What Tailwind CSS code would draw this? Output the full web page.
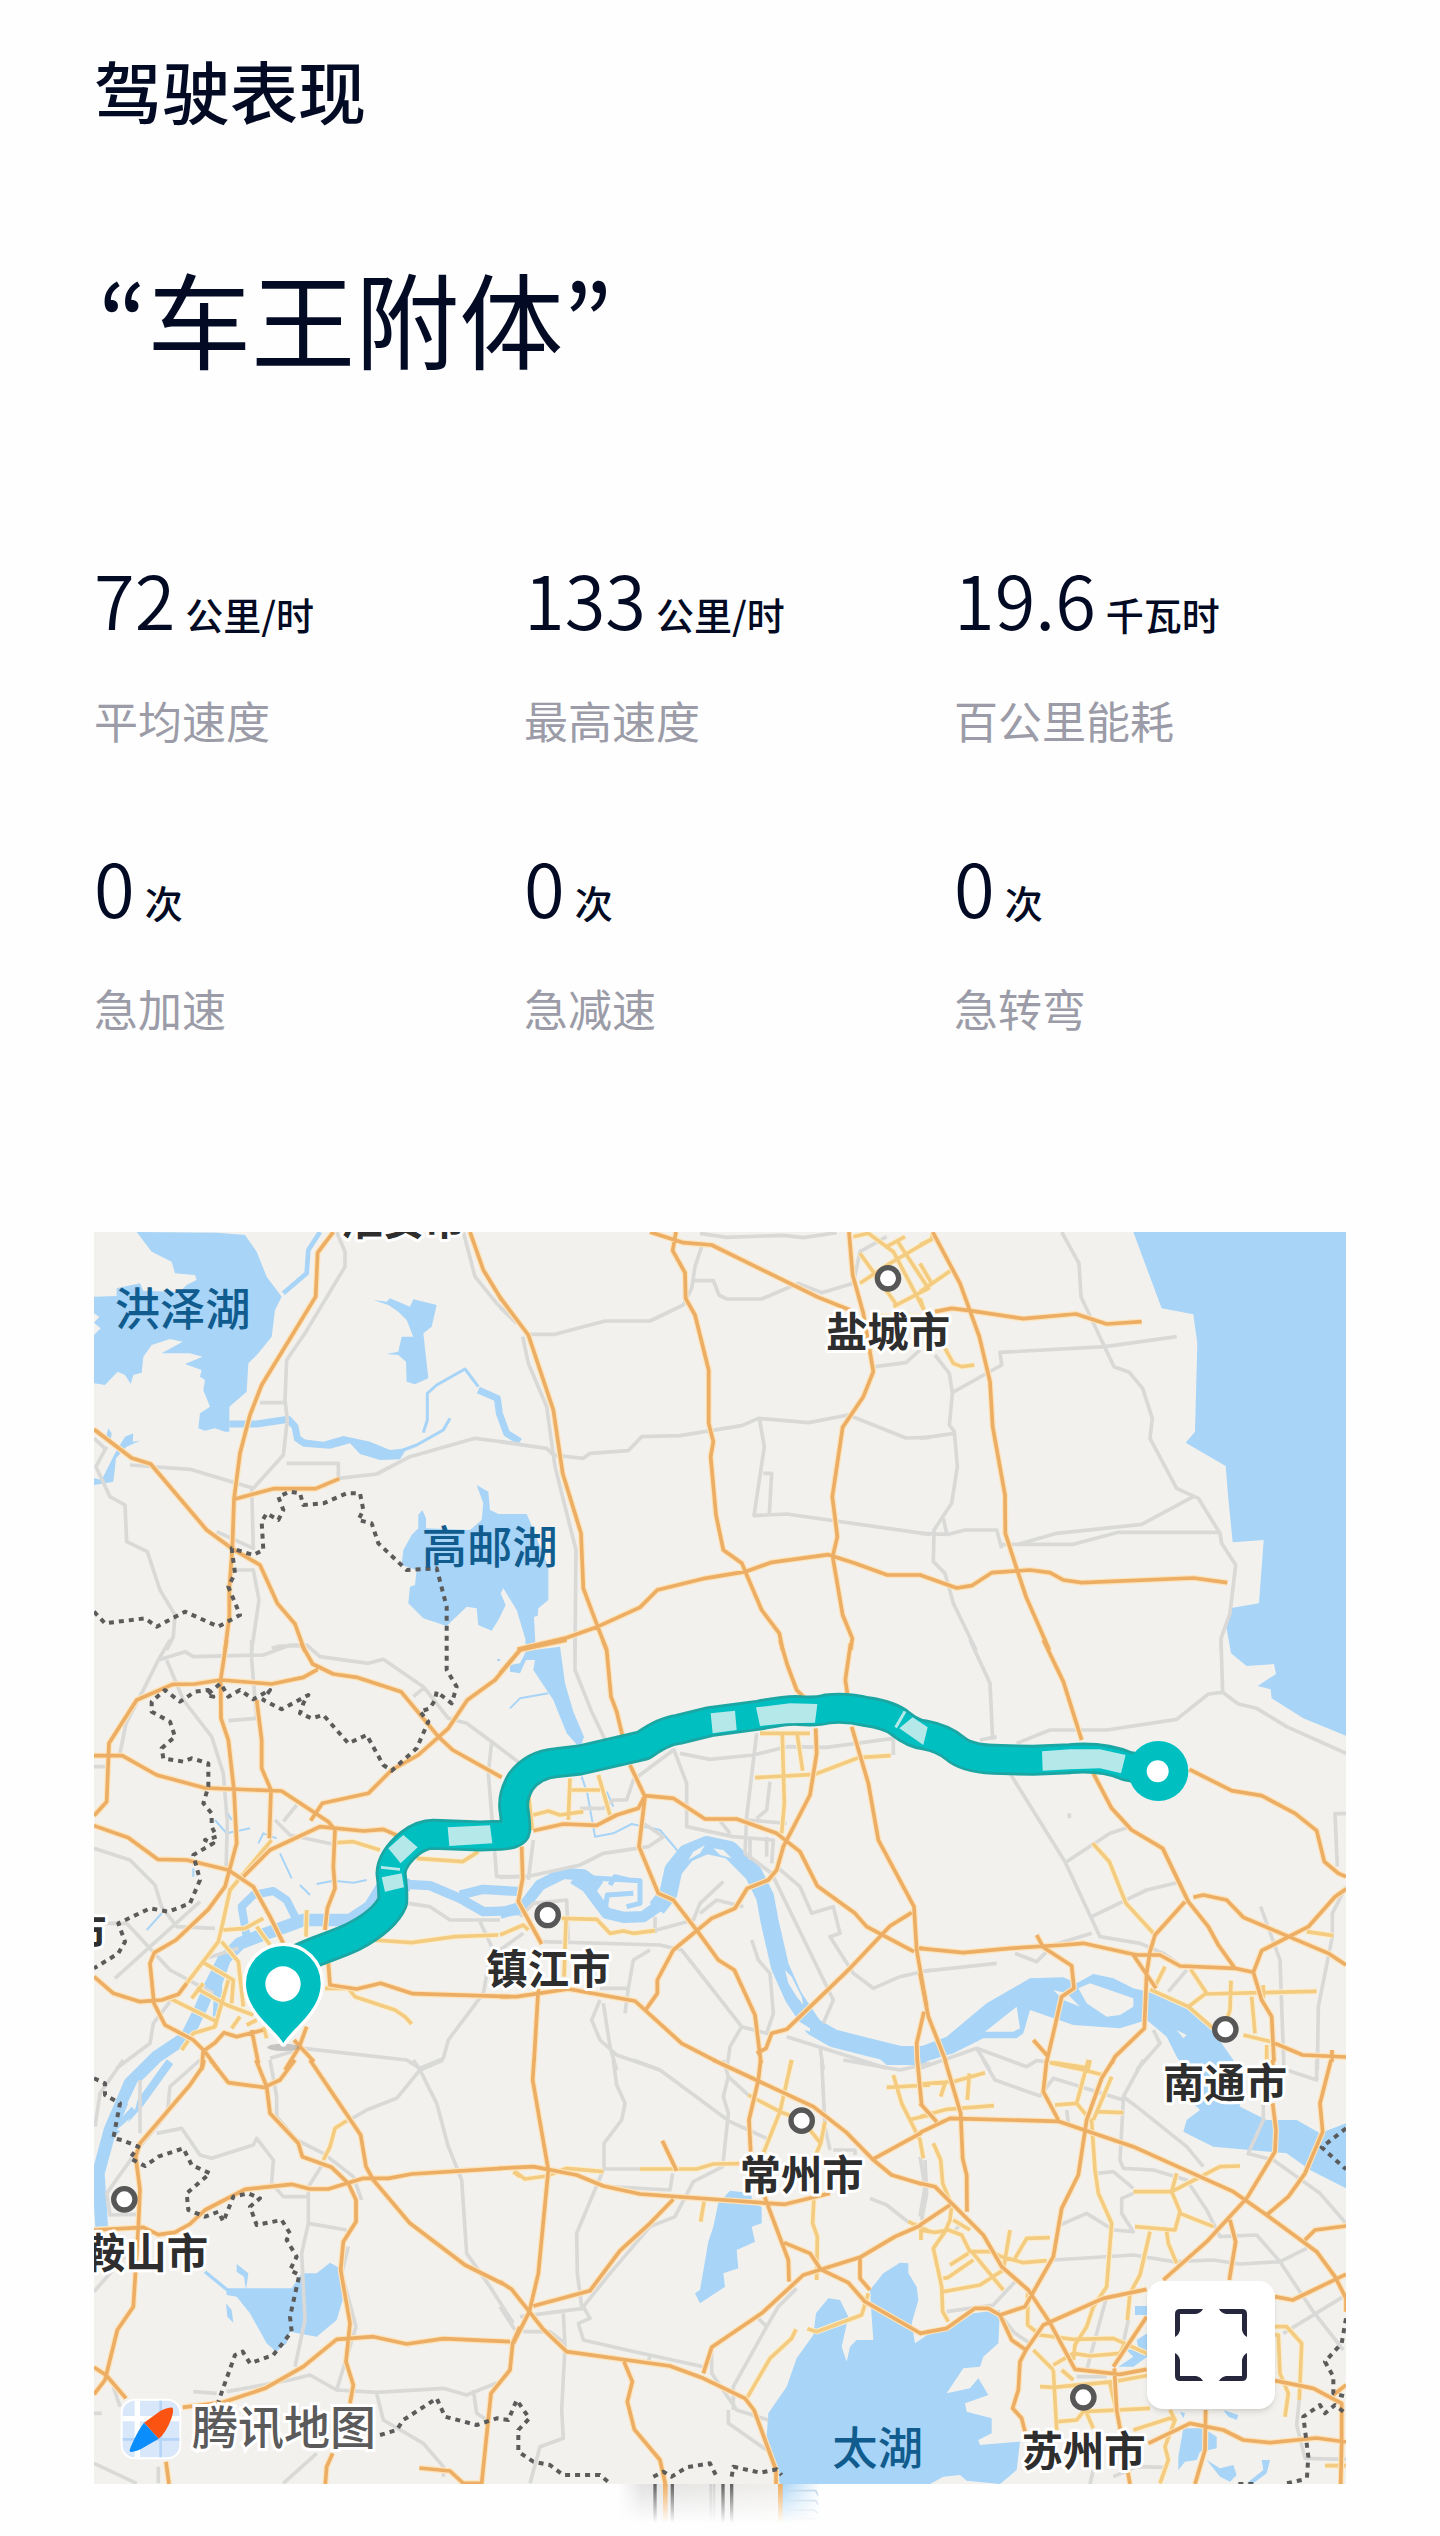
<!DOCTYPE html>
<html lang="zh-CN">
<head>
    <meta charset="UTF-8">
    <meta name="viewport" content="width=device-width, initial-scale=1.0">
    <title>驾驶表现</title>
    <!-- tailwind css link -->
    <script src="https://cdn.jsdelivr.net/npm/@tailwindcss/browser@4"></script>
</head>
<body class="bg-[#fefefe] font-['Noto_Sans_CJK_SC',sans-serif] text-[#020a24]">
    <main class="px-[94px] pt-[42px]">
        <h1 class="text-[68px] leading-[96px] font-medium">驾驶表现</h1>
        <p class="mt-[104px] flex pl-1 text-[104px] leading-[150px] font-normal">
            <span class="font-['Noto_Sans_CJK_KR',sans-serif]" lang="ko">“</span><span>车王附体</span><span class="font-['Noto_Sans_CJK_KR',sans-serif]" lang="ko">”</span>
        </p>

        <!-- stats -->
        <dl class="mt-[158px] grid grid-cols-3 gap-x-[38px] gap-y-[86px]">
            <div class="flex flex-col-reverse gap-[42px]">
                <dt class="text-[44px] leading-[64px] text-[#9b9ca8]">平均速度</dt>
                <dd class="flex items-baseline gap-[10px]"><span class="text-[74px] leading-[96px] font-[350]">72</span><span class="text-[38px] leading-[54px] font-medium">公里/时</span></dd>
            </div>
            <div class="flex flex-col-reverse gap-[42px]">
                <dt class="text-[44px] leading-[64px] text-[#9b9ca8]">最高速度</dt>
                <dd class="flex items-baseline gap-[10px]"><span class="text-[74px] leading-[96px] font-[350]">133</span><span class="text-[38px] leading-[54px] font-medium">公里/时</span></dd>
            </div>
            <div class="flex flex-col-reverse gap-[42px]">
                <dt class="text-[44px] leading-[64px] text-[#9b9ca8]">百公里能耗</dt>
                <dd class="flex items-baseline gap-[10px]"><span class="text-[74px] leading-[96px] font-[350]">19.6</span><span class="text-[38px] leading-[54px] font-medium">千瓦时</span></dd>
            </div>
            <div class="flex flex-col-reverse gap-[42px]">
                <dt class="text-[44px] leading-[64px] text-[#9b9ca8]">急加速</dt>
                <dd class="flex items-baseline gap-[10px]"><span class="text-[74px] leading-[96px] font-[350]">0</span><span class="text-[38px] leading-[54px] font-medium">次</span></dd>
            </div>
            <div class="flex flex-col-reverse gap-[42px]">
                <dt class="text-[44px] leading-[64px] text-[#9b9ca8]">急减速</dt>
                <dd class="flex items-baseline gap-[10px]"><span class="text-[74px] leading-[96px] font-[350]">0</span><span class="text-[38px] leading-[54px] font-medium">次</span></dd>
            </div>
            <div class="flex flex-col-reverse gap-[42px]">
                <dt class="text-[44px] leading-[64px] text-[#9b9ca8]">急转弯</dt>
                <dd class="flex items-baseline gap-[10px]"><span class="text-[74px] leading-[96px] font-[350]">0</span><span class="text-[38px] leading-[54px] font-medium">次</span></dd>
            </div>
        </dl>

        <!-- trip map, drawn in nine tiles -->
        <section class="relative mt-[192px] aspect-square w-full overflow-hidden bg-[#f2f1ed]" aria-label="行程地图">
            <svg class="block size-full" viewBox="0 0 3756 3756" fill="none" stroke-linejoin="round">
                <defs>
                    <g id="highways">
                        <path transform="translate(-12 -36)" d="M730 36L683 98L677 230L515 495L480 585L450 700L432 838L427 985L418 1105V1190L405 1290M12 628L125 714L182 732L350 930L425 985L510 1035L562 1150L615 1212L645 1295M432 838L550 806H677L748 776M1140 36L1180 150L1235 240"/>
                        <path transform="translate(1218 -36)" d="M0 232L85 345L160 570L188 760L243 940L250 1105L293 1220L320 1290M450 36L550 68L635 75L955 232L1050 270M528 36L518 92L555 158L557 235L585 285L626 450V610L640 665L632 710L648 885L670 990L726 1030L736 1055L785 1170L838 1240L848 1290M1047 36L1058 165L1090 280L1120 455L1090 530L1028 622L997 830L1012 950L998 1010L1028 1185L1057 1255L1052 1290M52 1288L200 1253L293 1220L420 1162L472 1110L615 1075L736 1055L815 1027L985 1004L1065 1030L1162 1065H1265"/>
                        <path transform="translate(2478 -36)" d="M38 36L120 190L178 350L210 485L218 620L255 825L256 940L293 1055L318 1130L388 1290M45 275L95 265L150 272L310 296L468 282L560 312L665 305M0 1065L110 1104L155 1097L215 1058L330 1050L390 1058L430 1080L485 1088L820 1074L922 1088"/>
                        <path transform="translate(-12 1224)" d="M12 347H97L200 405L345 444L575 453L715 545L735 570L730 680L735 745L712 805L705 870M410 0L392 120L393 235L415 300L432 450L440 610L405 740L355 808L258 900L193 938L180 970L192 1090L225 1155L310 1200L340 1230L335 1290M345 1235L385 1290M12 527L50 485L57 310L140 180L248 133L315 132L392 120L545 132L640 112L683 88M633 10L668 72L730 102L800 112L933 155L1045 290L1088 330L1235 412M1290 30L1215 120L1132 180L1075 265L985 345L905 390L835 460L697 490L662 542M500 180L515 300V385L543 450L538 595M12 557L115 593L203 658L290 660L415 690L490 740L540 830L580 910M460 710L540 630L690 560L820 573L880 568L930 590M12 1010L70 1060L150 1085L215 1080L265 1063L290 1030M715 970L720 1035L800 1047L872 1030L968 1061L1260 1070M485 1170L505 1270M520 1170L440 1190L402 1178L375 1208L345 1230M650 1160L628 1220L585 1290M612 1200L672 1265"/>
                        <path transform="translate(1218 1224)" d="M0 100L60 30L200 0M308 0L320 30L333 170L350 215L368 290M390 375L435 470L417 620L475 760L520 780L595 877L655 960L703 990L765 1125L783 1270M840 0L862 75L890 150L912 172M1052 10L1036 120L1042 160M1055 260L1105 430L1135 600L1242 800L1250 930L1280 1100M947 265L950 340L930 465L850 620L830 690L805 720L742 745L705 805L635 835L520 930L472 1020V1060L438 1108M100 572L190 552L290 556L350 525L415 505L435 467L520 475L615 537H710L830 580L900 635L952 738L1065 820L1100 860L1242 935M0 1070H50L205 1047L405 1083L545 1210L645 1262M65 620L68 715L55 785L125 912M115 1045L102 1265M770 1240L798 1225L815 1180L860 1168L1050 985L1170 858L1235 818M1272 1115L1250 1210L1252 1265M1257 925H1270"/>
                        <path transform="translate(2478 1224)" d="M370 0L430 125L485 300M520 400L575 505L635 570L728 625L805 785L865 860L895 915L945 985M0 925L130 938L270 925L430 915L490 910L650 945H720L780 978L945 985L1000 997L1025 1080L1055 1130L1062 1265M350 885L370 922L455 977L462 1045L425 1070L400 1180L380 1265M638 942L708 1045M795 785L705 885L690 935L680 1000L673 1165L585 1250L575 1270M820 772L850 765L920 780L970 832L1225 940L1278 975M1000 997L1025 932L1165 860L1245 770L1278 747M808 388L935 452L1025 467L1125 520L1190 572L1213 665L1255 700L1278 710M1065 1210L1148 1245L1278 1251M1236 1230V1265M340 1200L385 1250M0 1000L25 1130L78 1265"/>
                        <path transform="translate(-12 2484)" d="M342 0L338 20L300 75L150 250L137 290L150 390L145 500L130 740L82 810L45 960L12 1003M12 510L160 502L205 524L255 517L300 492L345 450L465 388L605 373L660 387H715L820 355H895L965 342L1235 325M362 0L415 68L522 82L570 60L615 0M498 0L530 80L540 160L625 250L637 290L725 322L775 370L798 420V485L760 545L752 630L780 790L768 905L790 975L780 1030M660 0L812 225L828 320L850 360L960 490L1125 615L1240 672M278 1042L395 1028L525 985L640 920L740 838L850 830L950 852L1060 836L1260 845M1290 800L1268 850L1260 930L1203 1000L1175 1270H1120L1080 1233L988 1224M12 922L48 945L108 1015M228 1205L237 1272M728 1180L710 1220L706 1272"/>
                        <path transform="translate(1218 2484)" d="M102 0L98 60L145 330L115 640L88 755L40 850M0 325L100 320L230 345L310 378L420 402L808 430L855 433L990 400M520 418L450 490L360 572L270 692L100 738M487 242L530 332M0 665L35 688L88 755L130 808L200 875L510 918L610 955L735 1015L762 1050L828 1230V1272M372 905L397 965L382 1025L403 1108L480 1200L496 1272M640 0L940 140L1040 218L1118 298L1175 345L1265 372M782 0L775 60L747 180L752 275M790 400L865 600L867 665M852 548L930 580L962 628L1045 668L1095 725L1265 822M1265 495L1185 530L1080 592L910 645L785 760L635 862L610 940M1080 592V655L1110 690M1118 298L1265 218M1252 0L1265 135"/>
                        <path transform="translate(2478 2484)" d="M75 0L122 160L128 295L140 345L141 455M0 218L90 175L415 184L640 260L940 395L1040 465L1190 575L1245 650L1278 715V755M380 0L370 95L415 180M580 0L545 55L500 180L475 345L425 445L400 590L315 740L240 765M0 130L50 185M0 370L45 380L190 525L245 620L325 690L388 785L465 928L600 943L680 928M0 495L90 435M0 820L80 805L165 745H205L240 765L275 840L318 870L300 905L295 990L278 1045L305 1075L315 1115M318 870L370 795L550 715L680 688M580 920L680 770M583 925L590 1050L630 1272M730 660L860 545L980 415L1065 275L1068 210L1058 130M1233 0L1200 130L1208 215L1155 340L1105 410L1040 465M930 480L947 545L928 660M1065 710L1118 720L1278 643M1155 540L1185 510L1278 498M1065 962L1180 985L1265 1030V1150L1262 1272M1240 1005L1278 975M685 1150L810 1090L910 1110L970 1140L1050 1148L1190 1134L1278 1146M857 1050L855 1170L825 1272M1058 0V30"/>
                    </g>
                    <g id="streets">
                        <path transform="translate(1218 -36)" d="M1060 50L1105 40L1180 95L1270 265M1080 100L1190 255M1290 60L1170 130L1080 190M1190 60L1285 205L1180 260M1160 80L1215 50M1140 288H1175M1225 288H1260"/>
                        <path transform="translate(2478 -36)" d="M0 75L35 58L38 40M0 130L35 190L10 210M95 150L0 215M75 385L100 430L125 440L163 435M0 235L15 280"/>
                        <path transform="translate(-12 1224)" d="M545 600L420 750L398 850L385 905L290 1030M740 608L790 605L870 630M980 655L1118 665L1165 635M850 900L965 908L1095 890L1225 885M400 870L465 865L520 835M500 860L540 915M395 905L445 965L460 1100M335 965L430 1020L425 1090M240 1075L380 1145L370 1165M340 1030L305 1075M320 1045L410 1095L490 1125M415 1020L375 1160L310 1180L275 1230M425 1165L450 1130M650 810L648 890M705 1045H775L795 1070L915 1110L945 1130L965 1152M470 1155L500 1140M520 1160L530 1195"/>
                        <path transform="translate(1218 1224)" d="M85 460L97 570M100 525L145 513L180 525L250 515M210 415L205 540M295 405L330 525M215 450H300M780 280H930M847 285L853 490L845 580M892 285L908 392M765 413L945 403L1075 353L1172 347M0 885L70 855L85 870M185 835L290 838L330 880L370 873L400 880L465 872M198 840L192 1010M875 1260L868 1290"/>
                        <path transform="translate(2478 1224)" d="M518 610L568 665L618 790L705 885M690 1048L805 1100L855 1062L1190 1054M805 1100L880 1165M735 980L705 1040M812 988L860 1060M933 1022L930 1110L920 1140M995 1070L1005 1180M970 1185L1065 1208M1040 1215V1265M1160 875L1240 887M400 1268L510 1285M1030 1035V1075M510 1260L505 1285"/>
                        <path transform="translate(-12 2484)" d="M770 182L735 205L720 260L700 300M1270 335L1290 350"/>
                        <path transform="translate(1218 2484)" d="M45 335L75 357L140 348L200 325L310 335M420 327H590L640 312L720 311M612 425L602 485M875 0L840 155L790 280M745 105L840 155L880 170M930 210L962 250L945 290M975 185L962 250M942 410L938 490L952 530L950 660M1160 82L1290 75M1180 45L1205 130L1260 240L1270 295M1225 180L1290 165M888 808L875 835L810 895L742 1012M922 806L950 815L1085 765L1105 700M1225 485L1290 515M1263 500V540"/>
                        <path transform="translate(2478 2484)" d="M0 72L100 65L195 38M75 70L62 110M148 40L142 120M0 170L80 148L222 137M390 8L470 25L550 45M505 0L470 130L405 135M470 130L515 185L525 330L535 400L575 490L560 680L520 740L500 800L465 855L460 900M575 50L520 180M530 155L610 158M40 250L62 300L68 370L95 435L90 480L75 515L40 565L65 680L68 755L85 785M0 510L45 517L85 510L125 525L150 575H210L245 590L310 608L380 602M155 575L250 690M90 615L145 580M70 655L85 652L160 600M70 695L180 675L250 630L270 510M285 595L320 535L390 533M100 480L150 510M640 395H755L900 320L960 318M770 340L755 395L780 455L765 510L645 500M780 460L880 500M740 515L745 550L770 610M690 515L660 645L630 700L622 780M323 700V795L360 825L460 838L580 835L680 880M340 870L400 930M400 915L460 880L510 888L600 880L615 850M360 980L400 982L580 965L690 945M425 930L460 960M400 930L410 1110M415 1085L470 1080L490 1055L690 1045M500 1060L520 1105M570 970L600 1100M640 1110L750 1075L765 1080L735 1160L745 1200L720 1270M750 1050L765 1080M1065 825H1075L1080 940L1105 1000L1095 1070M1065 800H1100L1145 850L1138 1020M1215 1217H1278"/>
                    </g>
                    <path id="route" transform="translate(1218 1224)" d="M-640 975C-560 930-500 920-440 890Q-345 840-322 785Q-320 755-327 700Q-325 655-270 610Q-235 583-200 583L-60 588L0 586Q45 583 47 570Q48 550 42 510Q36 470 62 425Q100 374 170 368L240 360L430 316Q490 273 535 268L630 245L780 225Q870 208 900 212Q950 216 980 207Q1040 200 1100 215Q1170 225 1200 250Q1240 282 1275 285Q1330 295 1365 325Q1400 355 1480 358L1600 361L1710 356Q1810 348 1880 378L1975 395"/>
                </defs>

                <!-- water -->
                <g fill="#a7d4f7">
                    <path transform="translate(-12 -36)" d="M140 36L185 95L245 125L255 160L315 165L320 180L290 195L270 215L160 213L150 190L80 205V228L12 230V280L28 290L12 308L32 325L12 345V490L45 495L83 455L105 465L122 492L130 465L155 458L160 410L185 375L240 357L278 365L215 400L300 400L338 410L285 432L335 450L330 470L345 480L340 510L360 560L330 580L325 625L345 632L375 625L405 635H418V560L470 515L475 430L505 400L545 350L555 270L575 230L530 170L500 95L465 45L380 38ZM850 240L890 245L900 235L960 260L970 238L1040 255L1025 320L1000 340L1015 475L975 493L950 485L948 425L925 405L890 402L925 395L935 350H970L950 300L925 275L895 255ZM620 640L640 658L700 665L760 648L840 665L900 690L950 685L930 718L870 720L810 702L780 670L720 686L640 680L612 660ZM1160 795L1195 815L1200 870L1225 882H1310L1318 900L1375 1040V1140L1345 1165L1343 1188L1332 1190L1337 1290H1315L1310 1270L1280 1170L1240 1105L1232 1120L1247 1155L1225 1200L1205 1232L1165 1215L1160 1165L1130 1160L1070 1218L1000 1195L955 1150L960 1100L975 1095L980 1050L935 1035L940 990L965 945L985 925V885L997 870L1008 895V925L1140 930L1175 900L1180 850ZM12 775L35 780L75 700L105 650L130 640L128 665L150 662L110 680L78 715L70 785L12 795ZM55 625L65 640L60 670L48 650Z"/>
                    <path transform="translate(2478 -36)" d="M640 36L725 265L820 283L832 370L825 635L797 668L917 738L925 835L938 967L1031 960L1017 1150L930 1165L918 1215L933 1300L980 1338L1062 1332L1068 1362L1013 1398L1052 1408L1055 1435L1150 1495L1278 1547V36Z"/>
                    <path transform="translate(1218 1224)" d="M75 0L100 30L180 20L195 130L220 215L252 290L240 325L200 280L160 180L100 90L105 60L78 60L60 100L30 95V75L60 70L80 30ZM1120 1240L1260 1235V1275H1160Z"/>
                    <path transform="translate(2478 1224)" d="M0 1220L80 1190L200 1090L330 1015L430 1012L470 1030L520 1002L580 1015L640 1045L700 1060L810 1100L870 1160L940 1260L960 1400L1040 1440H1130L1200 1480L1278 1450V1645L1170 1590L1100 1540L990 1530L880 1520L790 1475L800 1440L840 1410L820 1390L830 1340L770 1250L740 1190L680 1140L600 1165L460 1155L330 1110L310 1180L290 1195H190L100 1240L0 1270Z"/>
                    <path transform="translate(-12 2484)" d="M408 685H605L635 640H680L720 608L750 625L758 720L740 780L680 830L600 815L590 850L558 875L530 850L480 760L440 710L410 705ZM408 730L425 750L430 788L412 770ZM440 612L475 640L468 690L462 650L440 635Z"/>
                    <path transform="translate(1218 2484)" d="M690 392L755 400V430L785 440V490L755 500L765 545L710 570L715 625L670 640L675 680L600 730L585 700L600 690L625 545L640 500L655 430ZM840 1272L800 1130L805 1060L860 980L890 895L940 825L948 760L985 715L1020 720L1045 770L1025 860L1040 905L1050 860L1070 840H1120L1115 770L1110 690L1150 640L1200 608L1225 610V640L1250 680L1255 720L1235 790L1245 850L1290 820L1340 805L1420 760L1500 750L1495 850L1450 890L1440 920L1390 925L1340 1000L1410 985L1435 955L1465 1005L1395 1030L1400 1055L1475 1075V1120L1435 1140L1440 1155L1560 1145L1550 1230L1500 1272L1400 1262L1380 1245L1330 1250L1290 1272Z"/>
                    <path transform="translate(2478 2484)" d="M645 738H682V765H645ZM682 820L650 840L655 865L620 870L640 890L595 920H640L682 890ZM790 1105H850L890 1130V1165L840 1175L830 1200L795 1205L775 1230V1190ZM860 1200L900 1225L940 1215L950 1245L930 1265L900 1250ZM1025 1200H1050L1040 1240L1000 1270H980L1030 1230ZM780 1055L795 1060L790 1075ZM910 1050L955 1065L950 1080L925 1070Z"/>
                </g>
                <g stroke="#a7d4f7">
                    <path stroke-width="14" transform="translate(-12 -36)" d="M690 36L655 90L650 160L580 220"/>
                    <path stroke-width="9" transform="translate(-12 -36)" d="M1000 638L1012 600V520L1040 495L1125 447L1165 500M900 705L980 675L1060 630L1080 595"/>
                    <path stroke-width="21" transform="translate(-12 -36)" d="M418 612H500L595 598L615 620L622 655L640 668M1165 510L1222 535L1228 580L1250 640L1290 665"/>
                    <path stroke-width="38" transform="translate(-12 1224)" d="M35 1760L25 1600L60 1470L90 1400L120 1330L200 1250L290 1190L330 1110L360 1040L400 960L450 910L530 880L600 855L640 840H780L840 800L880 735L960 735"/>
                    <path stroke-width="24" transform="translate(-12 1224)" d="M60 1490L150 1390L240 1265M470 890L455 800L490 765L550 753L590 780L620 840M380 1130L385 1030L410 960"/>
                    <path stroke-width="28" transform="translate(-12 1224)" d="M950 733L1020 737L1110 775L1180 815L1290 812M1110 765L1180 748L1290 755"/>
                    <path stroke-width="34" transform="translate(1218 1224)" d="M0 820L70 800L120 735L190 700L250 705L300 740M220 715L260 740L320 820L370 832L430 830L480 795"/>
                    <path stroke-width="15" transform="translate(1218 1224)" d="M240 712L420 722V790L380 800M315 810L322 765L400 760M330 735L345 710L395 722"/>
                    <path stroke-width="54" transform="translate(1218 1224)" d="M470 805L505 760L520 690L560 640L620 615L690 630L760 700L795 770L810 850L840 980L880 1070L940 1160L1000 1195L1100 1220L1200 1245H1280"/>
                    <path stroke-width="6" transform="translate(1218 1224)" d="M30 205L60 175L145 160M245 410L262 460L285 590L340 580L395 552L480 570L535 635M320 455L340 500"/>
                    <path stroke-width="6" transform="translate(-12 1224)" d="M170 870L215 820M310 685V710M375 540L410 580L480 565M410 515L425 540M505 610L520 580L560 595M570 640L605 715M630 735L660 765M680 732L730 722L790 728L830 720M1222 60H1230"/>
                    <path stroke-width="10" transform="translate(-12 2484)" d="M345 635L412 690"/>
                </g>
                <!-- river islands -->
                <g fill="#f2f1ed">
                    <path transform="translate(1218 1224)" d="M565 660L580 635L615 615L600 640ZM640 625L670 630L695 655L660 645ZM855 990L875 1010L905 1070L910 1095L890 1070L865 1030ZM875 1130L930 1165V1175L900 1165Z"/>
                    <path transform="translate(2478 1224)" d="M475 1045L510 1030L640 1075V1100L600 1125L560 1130L500 1090ZM400 1050L440 1060L480 1100L430 1080ZM195 1175L290 1100L300 1165L280 1175ZM770 1170L800 1185L790 1195Z"/>
                    <path transform="translate(-12 2484)" d="M112 130L145 60L150 90L135 150ZM80 210L120 175L100 215Z"/>
                </g>

                <!-- minor roads -->
                <g stroke="#d9d9d8" stroke-width="11">
                    <path transform="translate(-12 -36)" d="M740 36L765 95V140L645 340L590 420L585 540L592 600L580 705L490 805L380 772L300 748L120 735M510 548H585M590 730H745V775L860 762L960 710L1155 655L1290 672M1120 36L1155 170L1220 250L1280 310M50 680L18 740L60 830L105 855L110 965L172 995L210 1110L255 1185L250 1250L230 1290M485 805L490 985L380 935M430 1050H490L507 1140L485 1290M545 1285L570 1278H640M12 655L50 690"/>
                    <path transform="translate(1218 -36)" d="M600 40L680 52L850 46L910 53L1010 38M605 80L585 140L575 205L550 255L450 303H315L165 343H90M580 182H640L657 225L680 237H785L895 190L965 218L1060 190L1080 95L1160 50M0 262L40 300M68 350L85 430L140 560L165 740L228 990L225 1290M0 665L140 685L160 705L250 715L270 700L385 692L425 650L540 647L725 617L775 595L925 608L1045 585L1218 654L1290 652M778 595L793 680L762 887L860 882L1290 943M790 760H815L808 880M1125 440L1218 428L1260 390"/>
                    <path transform="translate(2478 -36)" d="M425 36L477 130L483 230L582 440L628 457L668 505L697 595L690 655L770 805L835 835L900 940L905 970L947 1035L930 1180L903 1255V1290M45 405L88 460L97 520L88 615L103 635L112 740L95 850L42 930L40 1025L75 1060L100 1150L168 1290M97 518L245 435L240 397L555 380L770 350M0 655L103 640M0 940L85 943L135 930H230L245 985M295 973L410 940L665 913L820 830M245 973H460L595 937H900M70 895L80 940"/>
                    <path transform="translate(-12 1224)" d="M240 0L205 60L165 140L108 250L90 340M205 60L285 35L310 50L520 45L600 15H650L690 50L835 70L880 58L1000 140L1075 235L1130 250L1205 305L1290 370M970 170L1000 145M485 0V60L500 235L415 242M230 60L280 180L365 290L400 400L412 545L408 690M1205 305L1195 400L1220 710H1290M12 625L120 660L195 735L215 800L260 860L375 865M75 1015L330 785M12 850H110L240 990L370 1060M555 540L600 585L740 615M580 545L620 495M955 790L1020 800L1080 840H1230M1170 845L1205 920L1180 1060L1075 1200L1060 1255L990 1285L950 1260L640 1225L540 1255M240 1085L190 1150L180 1210L80 1285M350 955L445 925M12 380H45"/>
                    <path transform="translate(1218 1224)" d="M225 0V90L275 215L330 330M0 712L90 708L240 675L310 640L445 620L490 590L430 550M520 325L560 430V560L700 590L820 600L815 670M540 340L630 358L760 345L860 320L980 322L1180 295V345M520 330L400 420L380 480H340L310 505H240M770 280L740 530L735 640L815 700L1000 1080L970 1150M740 540L860 550M810 425L800 510L770 535M755 900L775 960L810 1000L820 1120L800 1180L725 1160L545 930L480 915L130 905M725 1160L690 1220L680 1290M470 870L580 840L600 790L670 725M600 820L650 780L730 800M830 680L900 740L935 820L1000 800L1020 880L990 890L1060 1000L1120 1045L1200 1010L1290 990M300 1080L275 1140L300 1200L350 1245L480 1290M310 1090L330 1220L350 1290M300 1045H385L375 1120M385 1045L400 960L450 930M860 1190L1160 1285M960 1220L970 1290M100 600L85 720M60 830L100 790L200 780L205 900M650 530L690 580M750 590V660M800 590V650M465 830V880M0 930L70 880"/>
                    <path transform="translate(2478 1224)" d="M150 0L210 130L218 300M180 300L230 290M270 400L435 665L540 890L660 910L730 940L780 975M290 310L390 270H560L770 238L865 162L908 157L903 0M908 157L955 192L1010 205L1100 260L1278 340M435 668L570 580L625 562M515 830L680 750L770 728M0 995L230 970M285 940L350 965L400 915L515 880M1278 521H1245L1252 680M1022 800L1080 960L1092 1290M1278 740L1237 820V890L1195 1100L1192 1290M0 1285L170 1225L320 1280L350 1262L420 1270M170 1225L210 1290M700 1170L720 1210L650 1290M800 990L745 1055M448 520V535"/>
                    <path transform="translate(-12 2484)" d="M100 0L30 100L15 200M540 0L560 110V170L620 240L700 280L790 350L815 420M330 0L240 80L232 160L150 260L50 400L60 465L140 463M150 60V220M200 220L275 205L330 285L365 295L490 255L500 235L550 300L545 370L580 410H650M970 0L990 30L1060 0M990 30L920 115L830 150L770 185M990 30L1040 130L1075 260L1115 360L1130 580L1200 680L1270 790M700 310L655 380V490L770 510M655 490L635 580L645 780L615 920M410 995L600 960L660 945L740 990L860 997L1060 985L1130 1005L1230 965M740 990L798 800L755 640L775 560M310 995L380 1000M860 1000L880 1080L1000 1150L1060 1220V1250M580 1270L680 1180M12 1210L140 1270M12 695L130 560M205 1220V1270M70 980L90 1040M1150 990L1160 1060L1190 1080M12 1060H35"/>
                    <path transform="translate(1218 2484)" d="M340 0L350 75L375 130L365 180L312 250V325L230 520L232 640L245 740M310 327H430M400 0L480 30L690 185L800 235M670 0L685 50L670 110L685 160L668 320L580 365L525 470L450 500L330 640L250 740L270 775L235 790L250 840L380 870L610 920M635 870V940L710 1050L805 1080M685 50L750 110M330 380L510 390L518 340M60 770L250 745M190 760L195 860L185 1050L190 1135L120 1160L90 1270M70 815H150L195 850M0 740L45 810M965 0L975 200L990 270M890 685L835 740L800 800L700 980V1050M685 1050V1090L800 1170M800 800L775 775M1110 415L1160 435L1230 490M1275 300L1280 400L1265 480M1000 270H1065V285M1030 0L1200 30L1290 10M450 890L440 915"/>
                    <path transform="translate(2478 2484)" d="M190 0L225 60L360 108L400 55L610 120L600 300L610 325L700 330L800 360L860 450L900 530L1010 525L1080 605L1180 755L1270 870M670 0L610 110L650 140L800 260L850 320M530 340L580 335L640 385M640 400L605 415V460L640 515L580 510L500 460L420 495M400 600L640 585L760 605L880 600L960 612L1080 605L1160 565M980 280L1060 300L1200 400L1278 490M1100 30L1190 60V0M1090 820L1270 710M0 290L15 380L0 470M80 755L220 735L290 660M245 770L285 820L330 850M560 710L500 930M605 870L625 780M1138 1020L1130 1095L1155 1195L1278 1198M580 1250L650 1220L740 1222M440 150L445 190M125 485L100 520M470 950H560M520 1230L510 1272M1030 130V180L985 280"/>
                </g>

                <use href="#streets" stroke="#fdedc8" stroke-width="17"/>
                <use href="#streets" stroke="#f3cc82" stroke-width="11"/>
                <use href="#highways" stroke="#fee3b8" stroke-width="18"/>
                <use href="#highways" stroke="#ecae65" stroke-width="11"/>

                <!-- borders -->
                <g stroke="#5b5b5b" stroke-width="12" stroke-dasharray="15 15">
                    <path transform="translate(-12 -36)" d="M12 1175L45 1210L165 1195L200 1220L285 1175L385 1220L450 1185L415 1100L435 1060L425 985L490 1005L520 990L515 905L530 880L565 900L580 870L565 830L600 815L630 820L640 855L700 850L770 820H810L820 870L805 900L845 910L865 970L950 1050L1040 1045L1070 1160V1350L1100 1400L1085 1450L1040 1415L1035 1440L1020 1465L990 1475L1015 1505L980 1585L905 1652L880 1635L830 1545L775 1570L700 1485L665 1495L630 1480L640 1450L655 1425L575 1468L540 1450L520 1440L540 1410L490 1438L450 1410L415 1430L392 1390L350 1425L370 1430L355 1410L315 1415L270 1445L225 1410L185 1445V1475L240 1505L255 1550L215 1585L220 1615L280 1625L305 1615L355 1630V1700L340 1750L365 1780V1820L380 1850L345 1860L370 1870L310 1905L330 1980L300 2050L235 2075L180 2065L85 2110L105 2165L85 2200L12 2245"/>
                    <path transform="translate(-12 2484)" d="M12 55L45 70V105L90 130L70 235L95 240L145 260L120 295L165 318L205 290L280 265L305 315L360 340L290 400L295 450L345 470L385 455L400 485L430 410L475 400L510 415L480 440L500 495L575 480L600 520L590 540L620 590L600 630L628 645L600 770L605 815L550 885L480 910L458 875L435 885L385 1025M870 1125L920 1110L940 1080L1040 1015L1065 1070L1160 1095L1220 1075L1255 1080L1280 1020L1318 1075L1285 1110V1175L1330 1205L1380 1215L1420 1245H1530L1560 1270"/>
                    <path transform="translate(1218 2484)" d="M460 1250L490 1235L515 1250L560 1222L630 1210L650 1250M695 1250L700 1220L780 1238L830 1228L845 1245"/>
                    <path transform="translate(2478 2484)" d="M1278 205L1205 262L1278 328M1278 775L1265 850L1215 905L1240 950V1000L1278 1010M1270 1055L1245 1035L1215 1060L1200 1035L1150 1070L1165 1190L1160 1265M1145 1260L1090 1272M1000 1272H950"/>
                </g>

                <!-- route, pale parts are the assisted stretches -->
                <use href="#route" stroke="#1ba6a3" stroke-width="93"/>
                <use href="#route" stroke="#00bfc1" stroke-width="76"/>
                <g fill="#b5e9e9">
                    <path transform="translate(-12 1224)" d="M895 625L940 585L983 622L932 670ZM873 678L930 684V692L873 686ZM875 712L935 700L942 742L885 755ZM1073 562L1200 556L1207 610L1078 618Z"/>
                    <path transform="translate(1218 1224)" d="M632 220L705 212L710 270L638 280ZM768 202L870 190L952 192L945 248L860 250L780 258ZM1211 212L1219 216L1191 265L1183 260ZM1238 232L1283 262L1270 315L1198 265Z"/>
                    <path transform="translate(2478 1224)" d="M366 334L450 328H540L617 345L603 400L540 385L450 388L368 392Z"/>
                </g>
                <circle cx="3193" cy="1617" r="90" fill="#00bfc1"/>
                <circle cx="3191" cy="1618" r="33" fill="#fff"/>
                <ellipse cx="568" cy="2446" rx="48" ry="11" fill="#8d8d8d" fill-opacity=".45"/>
                <path transform="translate(-12 1224)" d="M580 1210C555 1165 468 1115 468 1030A112 112 0 0 1 692 1030C692 1115 605 1165 580 1210Z" fill="#00bfc1" stroke="#fff" stroke-width="20" paint-order="stroke"/>
                <circle cx="567" cy="2256" r="53" fill="#fff"/>

                <!-- places -->
                <g fill="#fff" stroke="#575757" stroke-width="16">
                    <circle cx="2382" cy="139" r="32"/>
                    <circle cx="1361" cy="2049" r="32"/>
                    <circle cx="3394" cy="2392" r="32"/>
                    <circle cx="2123" cy="2666" r="32"/>
                    <circle cx="91" cy="2902" r="32"/>
                    <circle cx="2968" cy="3496" r="32"/>
                </g>
                <g class="font-bold" font-size="124" text-anchor="middle" fill="#2e2e2e" stroke="#fff" stroke-width="18" paint-order="stroke">
                    <text x="928" y="9">淮安市</text>
                    <text x="2382" y="346">盐城市</text>
                    <text x="1363" y="2256">镇江市</text>
                    <text x="3393" y="2597">南通市</text>
                    <text x="2123" y="2873">常州市</text>
                    <text x="156" y="3108">鞍山市</text>
                    <text x="2969" y="3702">苏州市</text>
                    <text x="-24" y="2146">市</text>
                </g>
                <g font-size="136" text-anchor="middle" fill="#115c8e" class="font-medium">
                    <text x="266" y="283">洪泽湖</text>
                    <text x="1187" y="996">高邮湖</text>
                    <text x="2351" y="3699">太湖</text>
                </g>
            </svg>

            <a href="#" class="absolute bottom-6 left-[26px] flex items-center gap-[10px]" aria-label="腾讯地图">
                <svg class="size-[62px]" viewBox="0 0 186 186">
                    <rect x="2" y="2" width="182" height="182" rx="42" fill="#fff"/>
                    <rect x="8" y="8" width="170" height="170" rx="36" fill="#d9e7fb"/>
                    <path d="M52 8V178M8 62H178" stroke="#fff" stroke-width="16"/>
                    <path d="M122 8V178M8 124H178" stroke="#b4d4f8" stroke-width="8"/>
                    <path d="M72 74L122 38Q154 24 158 30Q162 38 154 62Q136 108 116 122Z" fill="#fb5311"/>
                    <path d="M72 74L116 122L62 154Q32 166 29 160Q28 154 40 130Q56 94 72 74Z" fill="#0b8dfb"/>
                </svg>
                <svg class="h-[62px] w-[184px] overflow-visible" viewBox="0 0 184 62"><text x="0" y="46" font-size="46" class="font-medium" fill="#5b5b5b" stroke="#fff" stroke-width="6" paint-order="stroke">腾讯地图</text></svg>
            </a>
            <button type="button" aria-label="全屏" class="absolute right-[71px] bottom-[75px] flex size-32 items-center justify-center rounded-2xl bg-white shadow-md">
                <svg class="size-[72px]" viewBox="0 0 72 72" fill="#26263d"><path d="M0 28V5Q0 0 5 0H28Q26 4 21 5H5V21Q4 26 0 28ZM44 0H67Q72 0 72 5V28Q68 26 67 21V5H51Q46 4 44 0ZM72 44V67Q72 72 67 72H44Q46 68 51 67H67V51Q68 46 72 44ZM28 72H5Q0 72 0 67V44Q4 46 5 51V67H21Q26 68 28 72Z"/></svg>
            </button>
        </section>

        <!-- streaks fading out under the map -->
        <svg class="block w-full" viewBox="0 0 3756 156" aria-hidden="true">
            <defs>
                <linearGradient id="fade" x1="0" y1="0" x2="0" y2="1"><stop offset="0" stop-color="#fefefe" stop-opacity="0"/><stop offset="1" stop-color="#fefefe"/></linearGradient>
                <linearGradient id="haze" x1="0" y1="0" x2="1" y2="0"><stop offset="0" stop-color="#e9e9e9" stop-opacity="0"/><stop offset=".15" stop-color="#e2e2e2"/><stop offset="1" stop-color="#efeeeb"/></linearGradient>
                <linearGradient id="lake" x1="0" y1="0" x2="1" y2="0"><stop offset="0" stop-color="#a7d4f7"/><stop offset="1" stop-color="#a7d4f7" stop-opacity="0"/></linearGradient>
            </defs>
            <path d="M1570 0H2060V116H1570Z" fill="url(#haze)"/>
            <path d="M2060 0H2180V116H2060Z" fill="url(#lake)"/>
            <path d="M1683 0V116M1735 0V116M1887 0V116M1913 0V116" stroke="#606060" stroke-width="10"/>
            <path d="M1714 0V116M2059 0V116" stroke="#efae62" stroke-width="14"/>
            <path d="M1850 0V116M1860 0V116" stroke="#cfcfcf" stroke-width="8"/>
            <path d="M2080 20H2165L2172 34M2080 50H2165L2172 62M2080 78H2160L2172 88M2080 104H2165" stroke="#bcd3e6" stroke-width="5" fill="none"/>
            <path d="M1560 0H2190V118H1560Z" fill="url(#fade)"/>
        </svg>
    </main>
</body>
</html>
